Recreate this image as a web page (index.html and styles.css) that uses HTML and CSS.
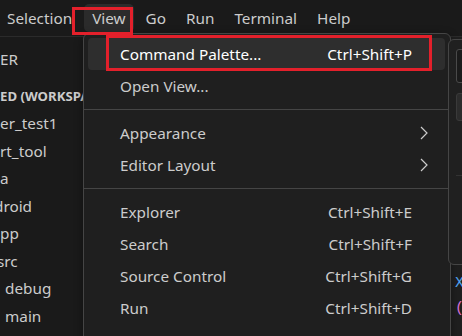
FILE: index.html
```html
<!DOCTYPE html>
<html lang="en">
<head>
  <meta charset="UTF-8" />
  <title>View menu</title>
  <link rel="stylesheet" href="styles.css">
</head>
<body>
  <div class="window">

    <!-- title bar -->
    <header class="titlebar">
      <ul class="menubar">
        <li>Selection</li>
        <li class="open">View</li>
        <li>Go</li>
        <li>Run</li>
        <li>Terminal</li>
        <li>Help</li>
      </ul>
    </header>

    <div class="workbench">
      <!-- explorer (scrolled off to the left) -->
      <aside class="sidebar">
        <div class="sidebar-title">ER</div>
        <div class="section-header">ED (WORKSPACE)</div>
        <ul class="tree">
          <li>er_test1</li>
          <li>rt_tool</li>
          <li>a</li>
          <li class="cut">droid</li>
          <li>pp</li>
          <li class="cut-s">src</li>
          <li class="deep">debug</li>
          <li class="deep">main</li>
        </ul>
      </aside>

      <!-- editor -->
      <div class="editor">
        <div class="code-line var">X</div>
        <div class="code-line bracket">(</div>
      </div>
    </div>

    <!-- View dropdown -->
    <div class="dropdown">
      <div class="menu-item active">
        <span class="label">Command Palette...</span>
        <span class="keys">Ctrl+Shift+P</span>
      </div>
      <div class="menu-item">
        <span class="label">Open View...</span>
      </div>
      <div class="separator"></div>
      <div class="menu-item">
        <span class="label">Appearance</span>
        <svg class="chevron" width="8" height="14" viewBox="0 0 8 14"><path d="M1 1l6 6-6 6" fill="none" stroke="#cccccc" stroke-width="1.2"/></svg>
      </div>
      <div class="menu-item">
        <span class="label">Editor Layout</span>
        <svg class="chevron" width="8" height="14" viewBox="0 0 8 14"><path d="M1 1l6 6-6 6" fill="none" stroke="#cccccc" stroke-width="1.2"/></svg>
      </div>
      <div class="separator"></div>
      <div class="menu-item">
        <span class="label">Explorer</span>
        <span class="keys">Ctrl+Shift+E</span>
      </div>
      <div class="menu-item">
        <span class="label">Search</span>
        <span class="keys">Ctrl+Shift+F</span>
      </div>
      <div class="menu-item">
        <span class="label">Source Control</span>
        <span class="keys">Ctrl+Shift+G</span>
      </div>
      <div class="menu-item">
        <span class="label">Run</span>
        <span class="keys">Ctrl+Shift+D</span>
      </div>
    </div>

    <!-- panel on the right edge -->
    <div class="widget">
      <div class="field"></div>
      <div class="field filled"></div>
      <div class="rule"></div>
    </div>

    <!-- red annotation boxes -->
    <div class="mark mark-view"></div>
    <div class="mark mark-palette"></div>
  </div>
</body>
</html>
```

FILE: styles.css
```css
* {
  margin: 0;
  padding: 0;
  box-sizing: border-box;
}

html,
body {
  width: 462px;
  height: 336px;
  overflow: hidden;
}

body {
  font-family: "Noto Sans", "Open Sans", sans-serif;
  background-color: #1a1a1a;
  color: #cccccc;
}

.window {
  position: relative;
  width: 462px;
  height: 336px;
  overflow: hidden;
}

/* title bar */
.titlebar {
  height: 37px;
  display: flex;
  align-items: center;
  background-color: #1a1a1a;
  border-bottom: 1px solid #2b2b2b;
}

.menubar {
  display: flex;
  list-style: none;
  margin-left: -3px;
  font-size: 15.3px;
}

.menubar li {
  padding: 4px 8px;
  margin: 0 2px;
  line-height: 20px;
  border-radius: 5px;
  white-space: nowrap;
}

.menubar li.open {
  background-color: #2b2b2b;
}

/* workbench */
.workbench {
  display: flex;
  height: 299px;
}

.sidebar {
  width: 451px;
  flex-shrink: 0;
  background-color: #1a1a1a;
  border-right: 1px solid #2b2b2b;
  font-size: 15.3px;
  overflow: hidden;
}

.sidebar-title {
  height: 45px;
  line-height: 45px;
  white-space: nowrap;
}

.section-header {
  height: 28px;
  line-height: 28px;
  font-size: 13.2px;
  font-weight: bold;
  white-space: nowrap;
}

.tree {
  list-style: none;
}

.tree li {
  height: 27.5px;
  line-height: 27.5px;
  white-space: nowrap;
}

.tree li.cut {
  margin-left: -6px;
}

.tree li.cut-s {
  margin-left: -3px;
}

.tree li.deep {
  padding-left: 5px;
}

.editor {
  flex: 1;
  background-color: #1f1f1f;
  padding: 234px 0 0 4px;
  font-family: "Liberation Mono", monospace;
  font-size: 15px;
}

.code-line {
  height: 25px;
  line-height: 25px;
}

.code-line.var {
  color: #4fa6f5;
}

.code-line.bracket {
  color: #da70d6;
}

/* dropdown */
.dropdown {
  position: absolute;
  left: 83px;
  top: 33px;
  width: 368px;
  height: 320px;
  padding: 4px 5px 4px 4px;
  background-color: #1f1f1f;
  border: 1px solid #454545;
  border-radius: 6px;
  box-shadow: 0 2px 8px rgba(0, 0, 0, 0.4);
  font-size: 15.3px;
}

.menu-item {
  display: flex;
  align-items: center;
  height: 32px;
  padding-left: 32px;
  border-radius: 4px;
  white-space: nowrap;
}

.menu-item.active {
  background-color: #2e2e2e;
  color: #ffffff;
}

.menu-item .label {
  flex: 1;
}

.menu-item .keys {
  padding-right: 33px;
}

.menu-item .chevron {
  margin-right: 17px;
}

.separator {
  height: 1px;
  margin: 7px -5px 7px -4px;
  background-color: #454545;
}

/* right panel */
.widget {
  position: absolute;
  left: 448px;
  top: 39px;
  width: 40px;
  height: 226px;
  padding: 9px 0 0 7px;
  background-color: #202020;
  border: 1px solid #454545;
  border-radius: 6px;
}

.field {
  height: 34px;
  border: 1px solid #4a4a4a;
  border-radius: 3px;
  background-color: #1b1b1b;
}

.field.filled {
  height: 28px;
  margin-top: 10px;
  border-color: #3a3a3a;
  background-color: #2c2c2c;
}

.rule {
  height: 1px;
  margin-top: 54px;
  background-color: #333333;
}

/* annotations */
.mark {
  position: absolute;
  border: 3px solid #e3202b;
}

.mark-view {
  left: 72px;
  top: 7px;
  width: 61px;
  height: 28px;
}

.mark-palette {
  left: 106px;
  top: 35px;
  width: 326px;
  height: 36px;
}
```
